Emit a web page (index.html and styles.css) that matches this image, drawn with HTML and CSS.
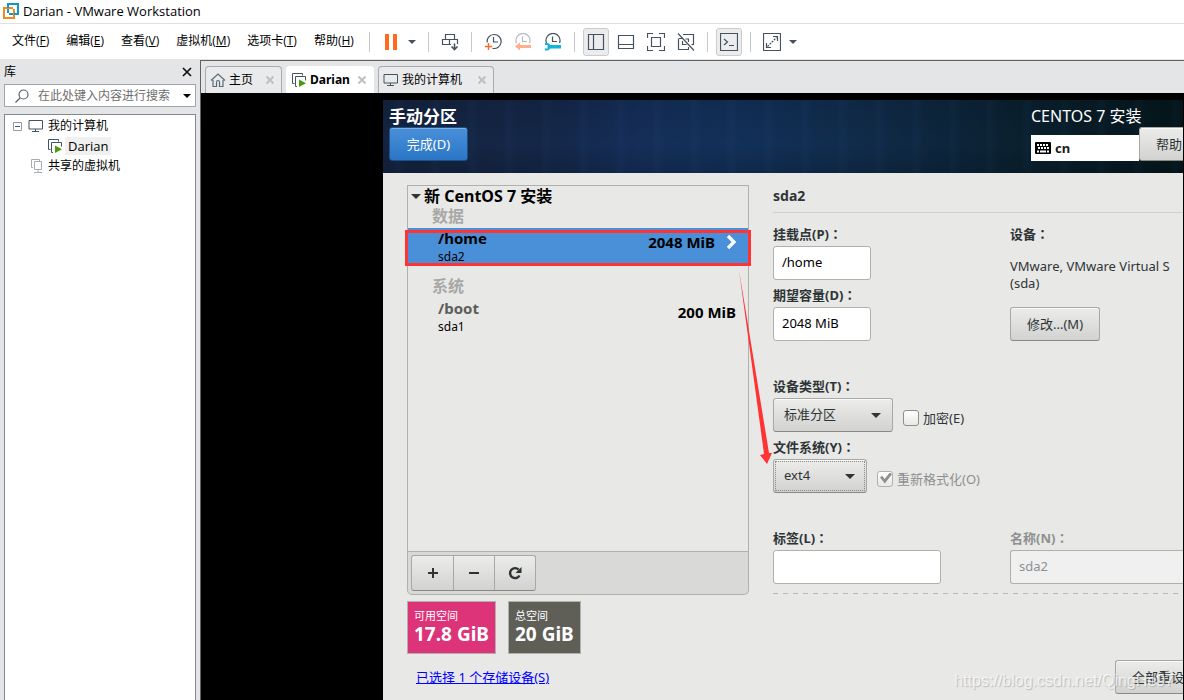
FILE: index.html
```html
<!DOCTYPE html>
<html lang="zh-CN">
<head>
<meta charset="utf-8">
<title>Darian - VMware Workstation</title>
<link rel="stylesheet" href="styles.css">
</head>
<body>
<svg class="defs" aria-hidden="true">
  <symbol id="monitor" viewBox="0 0 16 14"><path d="M1 1.500h13.500v8.500H1zM7.500 10v2.500M4 12.500h7" fill="none" stroke="currentColor"/></symbol>
  <symbol id="vm" viewBox="0 0 16 16"><path d="M3.500 11.500H1.500V1.500h10v2M6 14.500H4.500V4.500h10v4" fill="none" stroke="#44535f"/><path d="M8 7.500v7.500l7-3.700z" fill="#4a9b12"/></symbol>
  <symbol id="halfclock" viewBox="0 0 18 18"><path d="M2.500 10A7 7 0 1 1 15.500 10M8.500 3.500v5h4.500" fill="none" stroke="currentColor" stroke-width="1.200"/></symbol>
</svg>

<header class="titlebar">
  <svg width="18" height="18" viewBox="0 0 18 18" fill="none" stroke-width="2"><path d="M6 11V2h10v10H7" stroke="#1297c9"/><path d="M11 6H2v10h10V7" stroke="#f08a1a"/><path d="M6 6V2.500M12 12h3" stroke="#1297c9"/></svg>
  <h1>Darian - VMware Workstation</h1>
</header>

<div class="menurow">
  <nav class="menus">
    <button>文件(<u>F</u>)</button><button>编辑(<u>E</u>)</button><button>查看(<u>V</u>)</button><button>虚拟机(<u>M</u>)</button><button>选项卡(<u>T</u>)</button><button>帮助(<u>H</u>)</button>
  </nav>
  <div class="group tight">
    <button class="tool" aria-label="暂停"><svg width="18" height="18"><path d="M3 1h4v16H3zM11 1h4v16h-4z" fill="#ff6a1f"/></svg></button>
    <button class="caret" aria-label="电源选项"></button>
  </div>
  <div class="group">
    <button class="tool" aria-label="发送"><svg width="18" height="18" fill="none" stroke="#44535f" stroke-width="1.200"><path d="M4.500 6.500v-5h9v5M1.500 6.500h15v5h-15zM8.500 6.500v5"/><path d="M10 11h7v2h-7z" fill="#fff" stroke="none"/><path d="M13.500 10.500V17M10.500 13.500l3 3 3-3" stroke-width="1.600"/></svg></button>
  </div>
  <div class="group">
    <button class="tool" aria-label="拍摄快照"><svg class="line" width="18" height="18"><path d="M3.200 9.500A7 7 0 1 1 8.500 15.300M9.500 4v5H14"/><path d="M1 13.500h7M4.500 10v7" stroke="#ff6a1f" stroke-width="1.400"/></svg></button>
    <button class="tool" aria-label="恢复快照"><svg class="faded" width="18" height="18"><use href="#halfclock"/><path d="M1 13.500l5-4v2.500h11v3H6v2.500z" fill="#ffb08a"/></svg></button>
    <button class="tool" aria-label="管理快照"><svg class="slate" width="18" height="18"><use href="#halfclock"/><path d="M1 10h3l2.500 2H17v3.500H6.500L4 17.500H1v-2h2.500v-3.500H1z" fill="#13b5dc"/></svg></button>
  </div>
  <div class="group">
    <button class="tool on" aria-label="显示库"><svg class="line" width="18" height="18"><path d="M1.500 1.500h15v15h-15zM6.500 1.500v15"/></svg></button>
    <button class="tool" aria-label="缩略图栏"><svg class="line" width="18" height="18"><path d="M1.500 2.500h15v13h-15zM1.500 11.500h15"/></svg></button>
    <button class="tool" aria-label="全屏"><svg class="line" width="18" height="18"><path d="M4.500 4.500h9v9h-9zM.5 5V.5H6M12 .5h5.500V5M17.500 13v4.500H12M6 17.500H.5V13"/></svg></button>
    <button class="tool" aria-label="Unity"><svg class="line" width="18" height="18"><path d="M6 1.500h10.500v10h-2M1.500 6v10.500h10V14M1.500 5.500h4M5.500 8v3.500h4M11.500 9V6H8.500M1 .5l16 17"/></svg></button>
  </div>
  <div class="group">
    <button class="tool on" aria-label="控制台"><svg class="line" width="18" height="18"><path d="M.5.500h17v17H.5z"/><path d="M4 6l3.500 3L4 12M9 12.500h5"/></svg></button>
  </div>
  <div class="group tight">
    <button class="tool" aria-label="拉伸"><svg class="line" width="18" height="18"><path d="M.5.500h17v17H.5zM10 3.500h4.500V8M3.500 10v4.500H8"/><path d="M4.500 13.500l9-9" stroke-dasharray="2 1"/></svg></button>
    <button class="caret" aria-label="显示选项"></button>
  </div>
</div>

<div class="workspace">
  <aside class="library">
    <div class="libhead"><h2>库</h2><button aria-label="关闭"><svg width="10" height="10"><path d="M1 1l8 8M9 1L1 9" stroke="#111" stroke-width="1.700"/></svg></button></div>
    <div class="search">
      <svg width="14" height="14" fill="none" stroke="#55626c" stroke-width="1.200"><circle cx="8.500" cy="5.500" r="4.500"/><path d="M5 9l-4.500 4.500"/></svg>
      <input aria-label="搜索" placeholder="在此处键入内容进行搜索">
      <button class="caret dark" aria-label="搜索选项"></button>
    </div>
    <ul class="tree">
      <li><svg class="expander" width="9" height="9"><path d="M.5.500h8v8h-8z" fill="#fff" stroke="#999"/><path d="M2 4.500h5" stroke="#3355aa"/></svg><svg class="slate" width="16" height="14"><use href="#monitor"/></svg><span>我的计算机</span></li>
      <li class="child"><svg width="16" height="16"><use href="#vm"/></svg><span class="current">Darian</span></li>
      <li class="shared"><svg width="14" height="16" fill="none" stroke="#a5adb3"><path d="M3 9.500H1.500v-8h8V3M4.500 3.500h7v8h-7zM8 11.500v3M4 14.500h8"/></svg><span>共享的虚拟机</span></li>
    </ul>
  </aside>

  <main class="stage">
    <div class="tabs" role="tablist">
      <div class="tab home"><svg width="16" height="16" fill="none" stroke="#5b6b77" stroke-width="1.200"><path d="M1 8.500l7-6.500 7 6.500M3 8v6.500h3.500V10a1.500 1.500 0 0 1 3 0v4.500H13V8"/></svg><span role="tab">主页</span><button aria-label="关闭"><svg class="cross" width="8" height="8"><path d="M.5.500l7 7M7.500.500l-7 7"/></svg></button></div>
      <div class="tab active"><svg width="16" height="16"><use href="#vm"/></svg><span role="tab">Darian</span><button aria-label="关闭"><svg class="cross" width="8" height="8"><path d="M.5.500l7 7M7.500.500l-7 7"/></svg></button></div>
      <div class="tab mine"><svg class="slate" width="16" height="14"><use href="#monitor"/></svg><span role="tab">我的计算机</span><button aria-label="关闭"><svg class="cross" width="8" height="8"><path d="M.5.500l7 7M7.500.500l-7 7"/></svg></button></div>
    </div>

    <div class="console">
      <section class="installer">
        <header class="banner">
          <div>
            <h2>手动分区</h2>
            <button class="done">完成(D)</button>
          </div>
          <div class="product">
            <p>CENTOS 7 安装</p>
            <div class="locale">
              <span class="keyboard"><svg width="16" height="12"><rect width="16" height="12" rx="1"/><path d="M2 3h12M3 6h11" stroke="#fff" stroke-width="2" stroke-dasharray="2 1"/><path d="M2 9.500h2M5 9.500h6M12 9.500h2" stroke="#fff" stroke-width="2"/></svg>cn</span>
              <button class="gtk help">帮助</button>
            </div>
          </div>
        </header>

        <div class="content">
          <div class="left">
            <div class="mounts">
              <h3><i class="open"></i>新 CentOS 7 安装</h3>
              <h4>数据</h4>
              <div class="mount selected"><div><b>/home</b><small>sda2</small></div><strong>2048 MiB</strong><svg width="12" height="16"><path d="M2 2l6 6-6 6" fill="none" stroke="#fff" stroke-width="3.200"/></svg></div>
              <h4 class="second">系统</h4>
              <div class="mount"><div><b>/boot</b><small>sda1</small></div><strong>200 MiB</strong></div>
            </div>
            <div class="actions">
              <div class="buttons">
                <button aria-label="添加"><svg width="16" height="16"><path d="M3 8h10M8 3v10" stroke="#2e3436" stroke-width="2"/></svg></button>
                <button aria-label="删除"><svg width="16" height="16"><path d="M3 8h10" stroke="#2e3436" stroke-width="2"/></svg></button>
                <button aria-label="重新载入"><svg width="16" height="16"><path d="M12.500 10.500A5 5 0 1 1 11.500 4.500" fill="none" stroke="#2e3436" stroke-width="2.400"/><path d="M14.500 2v6h-6z" fill="#2e3436"/></svg></button>
              </div>
            </div>
            <div class="space">
              <div class="free"><span>可用空间</span><b>17.8 GiB</b></div>
              <div class="total"><span>总空间</span><b>20 GiB</b></div>
            </div>
            <a class="devices" href="#">已选择 1 个存储设备(S)</a>
          </div>

          <form class="details">
            <h3>sda2</h3>
            <div class="grid">
              <div>
                <label for="mp">挂载点(P)<span class="colon" lang="zh-TW">：</span></label><input id="mp" class="short" value="/home">
                <label for="cap">期望容量(D)<span class="colon" lang="zh-TW">：</span></label><input id="cap" class="short" value="2048 MiB">
              </div>
              <div>
                <h4>设备<span class="colon" lang="zh-TW">：</span></h4>
                <p>VMware, VMware Virtual S<br>(sda)</p>
                <button type="button" class="gtk">修改...(M)</button>
              </div>
              <div class="wide">
                <label for="type">设备类型(T)<span class="colon" lang="zh-TW">：</span></label>
                <div class="pair"><span class="select type"><select id="type"><option>标准分区</option></select></span><label class="check"><input type="checkbox">加密(E)</label></div>
                <label for="fs">文件系统(Y)<span class="colon" lang="zh-TW">：</span></label>
                <div class="pair"><span class="select fs"><select id="fs"><option>ext4</option></select></span><label class="check off"><input type="checkbox" checked disabled>重新格式化(O)</label></div>
              </div>
              <div><label for="lb">标签(L)<span class="colon" lang="zh-TW">：</span></label><input id="lb" class="medium"></div>
              <div class="off"><label for="nm">名称(N)<span class="colon" lang="zh-TW">：</span></label><input id="nm" class="name" value="sda2" disabled></div>
            </div>
            <div class="dashes"></div>
            <button type="button" class="gtk reset">全部重设</button>
          </form>
        </div>

        <div class="frame"></div>
        <svg class="arrow" width="34" height="194"><path d="M0 0l30 183h3l-5 11-7-9 4-1z" fill="#f33"/></svg>
      </section>
    </div>
  </main>
</div>
<div class="watermark">https://blog.csdn.net/QingHe97</div>
</body>
</html>
```
FILE: styles.css
```css
* { box-sizing: border-box; }
body {
  margin: 0;
  height: 100vh;
  display: flex;
  flex-direction: column;
  overflow: hidden;
  position: relative;
  background: #fff;
  color: #000;
  font: 12px/16px "Open Sans", "Noto Sans CJK SC", sans-serif;
}
h1, h2, h3, h4, p, ul { margin: 0; padding: 0; font: inherit; }
ul { list-style: none; }
button { margin: 0; padding: 0; border: 0; background: none; color: inherit; font: inherit; white-space: nowrap; }
input, select { margin: 0; font: inherit; color: inherit; }
svg { display: block; flex: none; }
.defs { position: absolute; width: 0; height: 0; }

.titlebar { display: flex; align-items: center; gap: 3px; height: 23px; padding: 0 2px 1px; }
.titlebar h1 { font-size: 13px; }

.menurow { display: flex; align-items: center; height: 36px; border-top: 1px solid #e0e0e0; }
.menus { display: flex; gap: 17px; min-width: 369px; padding: 0 0 2px 12px; }
.group { display: flex; align-items: center; gap: 4px; height: 20px; padding: 0 8px; border-left: 1px solid #c8c8c8; }
.tight { gap: 0; }
.tool { display: flex; align-items: center; justify-content: center; width: 26px; height: 28px; }
.on { background: #ebecee; border: 1px solid #ccc; border-radius: 3px; }
.line { fill: none; stroke: #44535f; stroke-width: 1.2; }
.slate { color: #44535f; }
.faded { color: #b5babe; }
.caret { display: flex; align-items: center; justify-content: center; width: 16px; height: 20px; color: #44535f; }
.caret::after { content: ""; border: 4px solid transparent; border-top-color: currentColor; border-bottom: 0; }
.dark { color: #000; }

.workspace { flex: 1; display: flex; min-height: 0; background: #e4e5e7; }
.library { flex: none; width: 200px; display: flex; flex-direction: column; padding: 0 4px; }
.libhead { display: flex; align-items: center; justify-content: space-between; height: 25px; padding-right: 4px; }
.search { display: flex; align-items: center; height: 23px; padding-left: 10px; background: #fff; border: 1px solid #a0a4a8; }
.search input { flex: 1; min-width: 0; height: 20px; margin-left: 9px; padding: 0; border: 0; outline: 0; background: none; }
.search input::placeholder { color: #6d6d6d; opacity: 1; }
.tree { flex: 1; margin-top: 7px; padding-top: 1px; background: #fff; border: 1px solid #828790; border-bottom: 0; }
.tree li { display: flex; align-items: center; gap: 4px; height: 20px; padding-left: 8px; }
.tree .expander { margin-right: 2px; }
.tree .child { padding-left: 42px; gap: 2px; font-size: 13px; }
.tree .shared { padding-left: 25px; }
.current { padding: 1px 3px; background: #f0f0f0; }

.stage { flex: 1; min-width: 0; display: flex; flex-direction: column; margin-top: 1px; border: solid #616161; border-width: 1px 0 0 1px; }
.tabs { display: flex; align-items: flex-end; gap: 4px; height: 32px; padding-left: 4px; }
.tab { display: flex; align-items: center; height: 27px; padding: 0 7px 0 4px; gap: 3px; background: #e9eaec; border: 1px solid #a8aaac; border-bottom: 0; border-radius: 4px 4px 0 0; }
.tab button { margin-left: auto; }
.cross { stroke: #c0c0c0; stroke-width: 2; }
.home { width: 77px; }
.active { width: 88px; background: #fff; border-color: #fff; font-weight: 700; font-family: "Noto Sans", "Noto Sans CJK SC", sans-serif; }
.mine { width: 116px; }

.console { flex: 1; min-height: 0; display: flex; padding: 7px 1px 0 182px; background: #000; }
.installer {
  position: relative;
  flex: 1;
  min-width: 0;
  display: flex;
  flex-direction: column;
  overflow: hidden;
  background: #e8e8e6;
  color: #2e3436;
  font: 13px/17px "Noto Sans", "Noto Sans CJK SC", sans-serif;
}
.banner {
  display: flex;
  justify-content: space-between;
  height: 73px;
  padding: 6px 0 0 6px;
  color: #fff;
  background:
    repeating-linear-gradient(90deg, transparent 0 9px, rgba(70,120,190,.04) 14px 16px, transparent 23px 37px),
    linear-gradient(rgba(0,0,0,.1), transparent 60%, rgba(0,0,0,.15)),
    linear-gradient(90deg, #14233f, #142748 20%, #152e59 32%, #123058 45%, #102b4a 60%, #0a202f 80%, #04161b);
}
.banner h2 { font-size: 17px; line-height: 21px; font-weight: 700; }
.done {
  width: 79px;
  height: 34px;
  border: 1px solid #1c5187;
  border-radius: 3px;
  background: linear-gradient(#4a90d9, #2a76c6);
  box-shadow: inset 0 1px #77aee5;
}
.product { width: 152px; }
.product p { font-size: 16px; line-height: 21px; }
.locale { display: flex; align-items: flex-end; }
.keyboard { display: flex; align-items: center; gap: 4px; flex: none; width: 108px; height: 26px; padding-left: 4px; background: #fff; color: #1a1a1a; font-weight: 700; }
.gtk {
  height: 34px;
  padding: 0 16px;
  color: #2e3436;
  border: 1px solid #a8a8a4;
  border-bottom-color: #8a8a84;
  border-radius: 3px;
  background: linear-gradient(#ececea, #d2d2d0);
  box-shadow: inset 0 1px #fafafa;
}
.help { flex: 1; min-width: 0; padding-right: 0; text-align: left; border-right: 0; border-radius: 3px 0 0 3px; }

.content { flex: 1; min-height: 0; display: flex; gap: 24px; padding: 12px 0 0 24px; }
.left { flex: none; width: 342px; display: flex; flex-direction: column; padding-bottom: 14px; }
.mounts { flex: 1; color: #000; border: 1px solid #b0b0ad; }
.mounts h3 { display: flex; align-items: center; gap: 3px; padding-left: 3px; font-size: 16px; line-height: 20px; font-weight: 700; }
.open { border: 5px solid transparent; border-top-color: #2e3436; border-bottom: 0; }
.mounts h4 { padding: 0 0 2px 24px; font-size: 16px; line-height: 20px; font-weight: 700; color: #a8a8a6; }
.mounts .second { margin: 10px 0 0; }
.mount { display: flex; padding: 0 12px 0 30px; line-height: 17px; }
.mount div { flex: 1; display: flex; flex-direction: column; }
.mount b { font-size: 15px; line-height: 20px; color: #5c5e5c; }
.mount strong { padding-top: 6px; font-size: 15px; }
.mount small { font-size: 12px; }
.selected { height: 38px; background: #4a90d9; padding-right: 10px; }
.selected b { color: #000; }
.selected svg { margin: 6px 0 0 11px; }
.actions { height: 43px; padding: 3px; background: #d9d9d7; border: 1px solid #b0b0ad; border-top: 0; border-radius: 0 0 5px 5px; }
.buttons { display: inline-flex; border: 1px solid #a8a8a4; border-bottom-color: #8a8a84; border-radius: 3px; background: linear-gradient(#ececea, #d2d2d0); }
.buttons button { display: flex; align-items: center; justify-content: center; width: 41px; height: 34px; }
.buttons button + button { border-left: 1px solid #a8a8a4; }
.space { display: flex; gap: 12px; margin: 6px 0 14px; color: #fff; }
.space div { display: flex; flex-direction: column; height: 53px; padding: 5px 6px; border: 1px solid #b0b0ad; }
.space span { font-size: 11px; line-height: 17px; }
.space b { font-size: 19px; line-height: 20px; }
.free { background: #dc3379; }
.total { background: #5f5f58; }
.devices { align-self: flex-start; margin-left: 9px; color: #00f; line-height: 18px; }

.details { flex: 1; min-width: 0; display: flex; flex-direction: column; padding-bottom: 6px; }
.details h3 { padding-bottom: 5px; border-bottom: 1px solid #cfcfcc; font-size: 14px; line-height: 22px; font-weight: 700; }
.grid { display: grid; grid-template-columns: 237px 1fr; row-gap: 30px; padding-top: 6px; }
.grid > div { min-width: 0; }
.wide { grid-column: 1 / -1; }
.grid label, .grid h4 { display: block; padding-top: 3px; line-height: 24px; font-weight: 700; }
.colon { font-family: "Noto Sans CJK TC", sans-serif; line-height: 1; }
.grid p { padding: 12px 0 15px; white-space: nowrap; }
.grid input:not([type]) { display: block; height: 34px; padding: 0 8px 2px; border: 1px solid #b0b0ad; border-radius: 3px; background: #fff; color: #000; }
.short { width: 98px; }
.medium { width: 168px; }
.grid .name:disabled { width: 100%; color: #8d9091; background: #f0f0f0; border-right: 0; border-radius: 3px 0 0 3px; }
.grid .off { color: #8d9091; }
.pair { display: flex; align-items: center; gap: 10px; }
.select { position: relative; }
.select::after { content: ""; position: absolute; right: 12px; top: 15px; border: 5px solid transparent; border-top-color: #2e3436; border-bottom: 0; pointer-events: none; }
.select select { display: block; appearance: none; width: 100%; height: 34px; padding: 0 10px 2px; border: 1px solid #a8a8a4; border-bottom-color: #8a8a84; border-radius: 3px; background: linear-gradient(#ececea, #d2d2d0); box-shadow: inset 0 1px #fafafa; }
.type { width: 120px; }
.fs { width: 94px; }
.fs select { outline: 1px dotted #8a8a84; outline-offset: -3px; }
.grid .check { display: flex; align-items: center; gap: 4px; padding-top: 5px; font-weight: 400; }
.check input { appearance: none; position: relative; width: 16px; height: 16px; border: 1px solid #8f8f8b; border-radius: 3px; background: linear-gradient(#fff, #e8e8e6); }
.check input:disabled { border-color: #b0b0ad; }
.check input:checked::after { content: ""; position: absolute; left: 2px; top: 1px; width: 12px; height: 11px; background: #8d9091; clip-path: polygon(0 45%, 18% 30%, 38% 58%, 82% 0, 100% 16%, 40% 100%); }
.dashes { height: 1px; margin-top: 9px; background: repeating-linear-gradient(90deg, #b8b8b5 0 5px, transparent 5px 10px); }
.reset { align-self: flex-end; width: 68px; margin-top: auto; padding-right: 0; text-align: left; border-right: 0; border-radius: 3px 0 0 3px; overflow: hidden; }

.frame { position: absolute; left: 22px; top: 130px; width: 346px; height: 36px; border: 3px solid #f33; }
.arrow { position: absolute; left: 356px; top: 170px; }
.watermark { position: absolute; right: 10px; bottom: 9px; font: 16px/20px "Liberation Sans", sans-serif; color: rgba(255,255,255,.7); text-shadow: 1px 1px 1px rgba(120,120,120,.4); }
```
